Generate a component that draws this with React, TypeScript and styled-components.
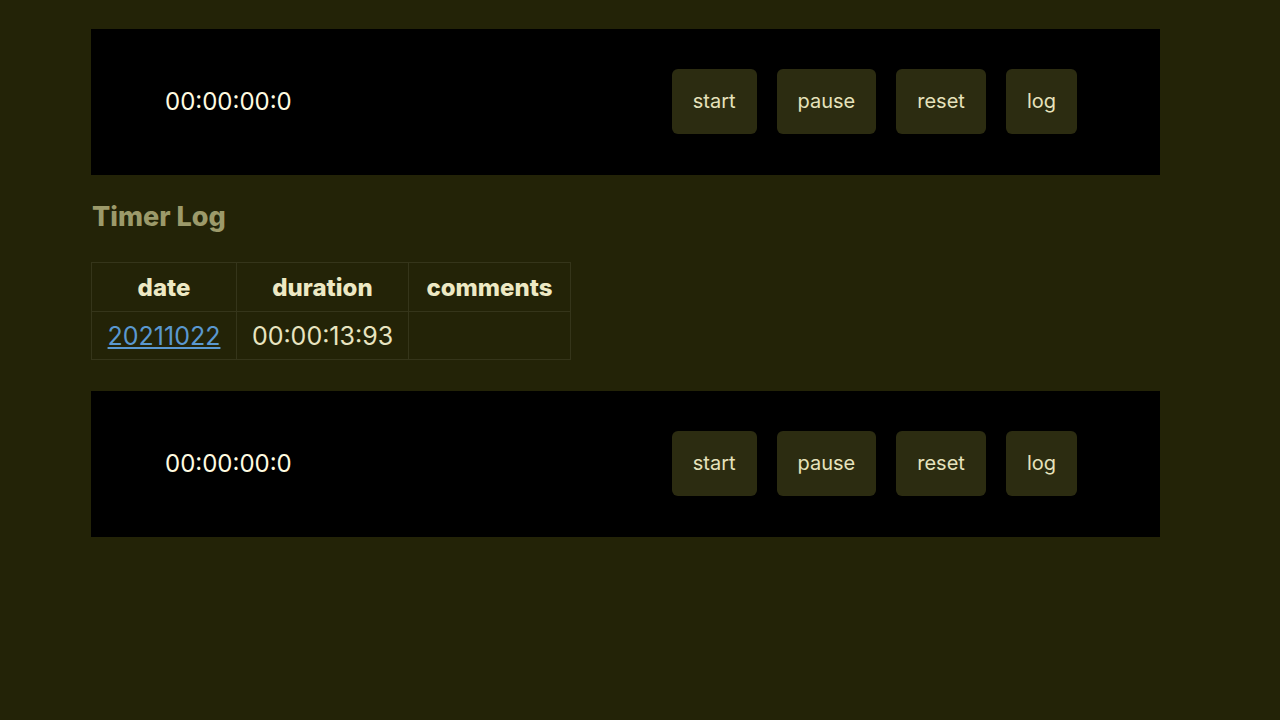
import React from "react";
import styled, { createGlobalStyle } from "styled-components";

const Global = createGlobalStyle`
  html, body { margin: 0; padding: 0; background: #232307; }
  body { font-family: Inter, "Noto Sans", sans-serif; color: #f2eec8; }
`;

const Page = styled.div`
  padding: 29px 0 0 91px;
  width: 1069px;
  display: flex;
  flex-direction: column;
`;

const TimerPanel = styled.div`
  background: #000;
  height: 146px;
  display: flex;
  align-items: center;
  padding: 0 83px 2px 74px;
  box-sizing: border-box;
`;

const TimeText = styled.div`
  font-size: 24px;
  color: #fffbe0;
  flex: 1;
`;

const Buttons = styled.div`
  display: flex;
  gap: 20px;
`;

const Button = styled.button`
  font-family: Inter, sans-serif;
  font-size: 20px;
  height: 65px;
  padding: 0 21px;
  background: #2c2c11;
  color: #e6e2bc;
  border: none;
  border-radius: 6px;
`;

const Title = styled.h2`
  margin: 27px 0 30px 1px;
  font-size: 27px;
  font-weight: 800;
  color: #9c9a6a;
  line-height: 30px;
`;

const Table = styled.table`
  border-collapse: collapse;
  align-self: flex-start;
  font-size: 25px;
  margin-bottom: 31px;
`;

const Th = styled.th<{ $w: number }>`
  width: ${(p) => p.$w}px;
  box-sizing: border-box;
  height: 49px;
  border: 1px solid #35351a;
  font-size: 24px;
  font-weight: 800;
  color: #ede9c4;
  padding: 0;
  text-align: center;
`;

const Td = styled.td`
  height: 47px;
  border: 1px solid #35351a;
  padding: 0;
  text-align: center;
  color: #e8e4c0;
`;

const DateLink = styled.a`
  color: #5a98d0;
  text-decoration: underline;
`;

function Timer() {
  return (
    <TimerPanel>
      <TimeText>00:00:00:0</TimeText>
      <Buttons>
        <Button>start</Button>
        <Button>pause</Button>
        <Button>reset</Button>
        <Button>log</Button>
      </Buttons>
    </TimerPanel>
  );
}

export default function App() {
  return (
    <>
      <Global />
      <Page>
        <Timer />
        <Title>Timer Log</Title>
        <Table>
          <thead>
            <tr>
              <Th $w={145}>date</Th>
              <Th $w={172}>duration</Th>
              <Th $w={162}>comments</Th>
            </tr>
          </thead>
          <tbody>
            <tr>
              <Td>
                <DateLink href="#">20211022</DateLink>
              </Td>
              <Td>00:00:13:93</Td>
              <Td></Td>
            </tr>
          </tbody>
        </Table>
        <Timer />
      </Page>
    </>
  );
}
